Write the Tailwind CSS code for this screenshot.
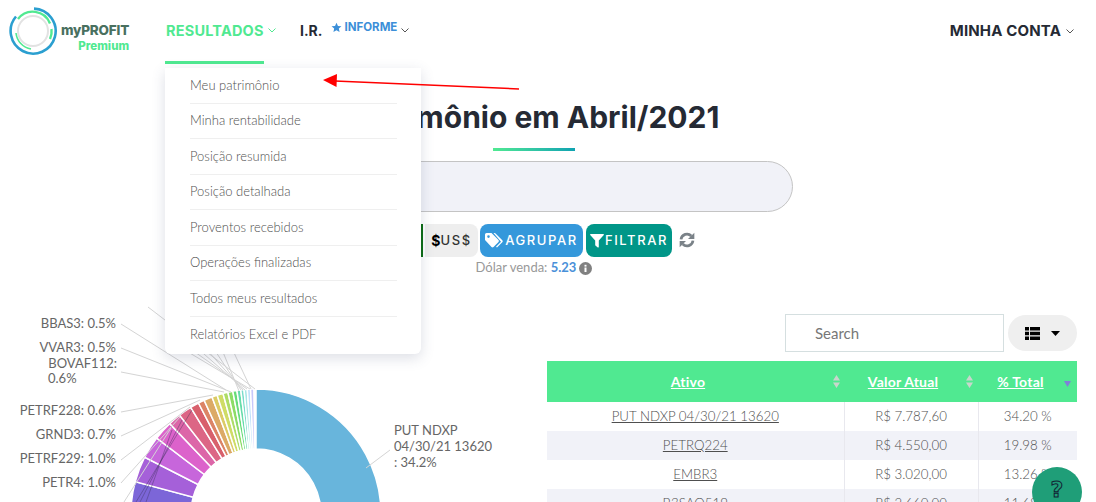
<!DOCTYPE html>
<html lang="pt-BR">

<head>
  <meta charset="UTF-8">
  <meta name="viewport" content="width=device-width, initial-scale=1.0">
  <title>Meu patrimônio</title>
  <script src="https://cdn.jsdelivr.net/npm/@tailwindcss/browser@4"></script>
</head>

<body class="bg-white font-['Lato',sans-serif] text-[#666]">
  <div class="relative h-[502px] w-[1096px] overflow-hidden">

    <!-- Topo -->
    <header class="flex h-[64px] items-start">
      <div class="flex w-[165px] shrink-0 pl-[9px] pt-[6px]">
        <svg width="50" height="50" viewBox="0 0 50 50" fill="none" class="shrink-0">
          <circle cx="24" cy="25" r="15" stroke="#e2e2e2" stroke-width="2" />
          <path d="M25 2.6A22.5 22.5 0 1 1 7 10.5" stroke="#2b9fd0" stroke-width="2.6" />
          <path d="M9 13A18.5 18.5 0 0 1 41 17.5M42.5 23A18.5 18.5 0 0 1 41 33" stroke="#50e991" stroke-width="2.4" />
          <path d="M7 27A18 18 0 0 0 22 43" stroke="#50e991" stroke-width="1.6" />
        </svg>
        <div class="ml-[2px] flex flex-col items-end pt-[16px] font-['Inter'] font-extrabold">
          <span class="text-[13.5px] leading-[17px] tracking-[-0.2px] text-[#49705f]">myPROFIT</span>
          <span class="text-[11.5px] leading-[15px] text-[#50e991]">Premium</span>
        </div>
      </div>
      <nav class="flex items-start font-['Inter'] font-bold">
        <div class="flex h-[64px] w-[99px] items-center whitespace-nowrap border-b-[3px] border-[#50e991] pl-[1px] text-[14.5px] tracking-[0.2px] text-[#50e991]">
          RESULTADOS
          <svg width="8" height="5" viewBox="0 0 8 5" fill="none" stroke="#50e991" class="ml-[4px] shrink-0"><path d="M.5.5 4 4 7.5.5" /></svg>
        </div>
        <div class="ml-[36px] pt-[21px] text-[14px] leading-[20px] text-[#252a34]">I.R.</div>
        <div class="ml-[9px] flex items-center pt-[20px] text-[11.5px] leading-[14px] text-[#3c8fd8]">
          <svg width="11" height="11" viewBox="0 0 24 24" fill="#3c8fd8" class="mr-[2px]"><path d="M12 1.5l3.2 7 7.6.8-5.7 5.1 1.6 7.5L12 18.1 5.3 21.9l1.6-7.5L1.2 9.3l7.6-.8z" /></svg>
          INFORME
          <svg width="8" height="5" viewBox="0 0 8 5" fill="none" stroke="#555" class="ml-[4px] mt-[6px]"><path d="M.5.5 4 4 7.5.5" /></svg>
        </div>
      </nav>
      <div class="ml-auto mr-[22px] flex items-center pt-[21px] font-['Inter'] text-[15px] font-bold leading-[20px] tracking-[0.15px] text-[#252a34]">
        MINHA CONTA
        <svg width="8" height="5" viewBox="0 0 8 5" fill="none" stroke="#555" class="ml-[5px]"><path d="M.5.5 4 4 7.5.5" /></svg>
      </div>
    </header>

    <!-- Título e filtros -->
    <section class="flex w-[1068px] flex-col items-center">
      <h1 class="mr-[72px] mt-[33px] whitespace-nowrap font-['Inter'] text-[30px] font-bold leading-[40px] text-[#252a34]">Meu patrimônio em Abril/2021</h1>
      <div class="mt-[11px] h-[3px] w-[82px] bg-gradient-to-r from-[#50e991] to-[#0fa3b1]"></div>
      <div class="mt-[10px] h-[51px] w-[518px] rounded-full border border-[#c4c4c4] bg-[#f1f2f8]"></div>
      <div class="ml-[347px] mt-[12px] flex h-[33px] w-[374px] items-stretch self-start font-['Inter'] text-[13px] font-medium tracking-[1.6px]">
        <div class="w-[76px] shrink-0 border-r-[2px] border-[#0a6b12]"></div>
        <div class="ml-[2px] flex w-[53px] shrink-0 items-center justify-center rounded-r-[8px] bg-[#eeeeee] text-[#333]"><b class="text-[14px] font-bold tracking-normal text-black">$</b>US$</div>
        <div class="ml-[2px] flex w-[103px] shrink-0 items-center justify-center rounded-[8px] bg-[#3498db] text-white">
          <svg width="18" height="15" viewBox="0 0 18 15" fill="#fff" class="mr-[2px] shrink-0"><path d="M0 1.5A1.5 1.5 0 0 1 1.5 0h5l7 7a1.5 1.5 0 0 1 0 2l-5 5a1.5 1.5 0 0 1-2 0l-6.5-7zM3.5 2.3a1.3 1.3 0 1 0 0 2.6 1.3 1.3 0 0 0 0-2.6z" /><path d="M8.5 0h1.5l7.3 7.3a1.5 1.5 0 0 1 0 2L12 14.500l-1-.7 5-5z" /></svg>
          AGRUPAR
        </div>
        <div class="ml-[3px] flex w-[86px] shrink-0 items-center justify-center rounded-[8px] bg-[#009688] text-white">
          <svg width="14" height="14" viewBox="0 0 14 14" fill="#fff" class="mr-[1px] shrink-0"><path d="M.6 0h12.8a.6.6 0 0 1 .4 1L8.8 6.5V13a.6.6 0 0 1-1 .4l-2.400-2a.6.6 0 0 1-.2-.5V6.5L.2 1A.6.6 0 0 1 .6 0z" /></svg>
          FILTRAR
        </div>
        <svg width="16" height="16" viewBox="0 0 24 24" fill="none" stroke="#7a8288" stroke-width="4" class="ml-[7px] mt-[8px] shrink-0"><path d="M3 11a9 9 0 0 1 15.5-5M21 13a9 9 0 0 1-15.5 5" /><path d="M23 1v9.5h-9.5zM1 23v-9.5h9.5z" fill="#7a8288" stroke="none" /></svg>
      </div>
      <div class="mt-[2px] flex h-[18px] items-center text-[13px] text-[#999]">
        Dólar venda:&nbsp;<b class="font-bold text-[#4a90d9]">5.23</b>
        <svg width="13" height="13" viewBox="0 0 13 13" class="ml-[3px]"><circle cx="6.5" cy="6.5" r="6.5" fill="#808080" /><rect x="5.5" y="5.5" width="2" height="4.5" fill="#fff" /><rect x="5.5" y="2.8" width="2" height="1.8" fill="#fff" /></svg>
      </div>
    </section>

    <!-- Gráfico e tabela -->
    <section class="flex h-[225px] items-start">
      <div class="w-[547px] shrink-0">
        <svg id="chart" width="547" height="225" viewBox="0 277 547 225" class="block text-[13px]">
          <g fill="#666" text-anchor="end">
            <text x="116" y="328">BBAS3: 0.5%</text>
            <text x="116" y="352">VVAR3: 0.5%</text>
            <text x="117" y="368">BOVAF112:</text>
            <text x="48" y="383" text-anchor="start">0.6%</text>
            <text x="116" y="415">PETRF228: 0.6%</text>
            <text x="116" y="439">GRND3: 0.7%</text>
            <text x="116" y="463">PETRF229: 1.0%</text>
            <text x="116" y="487">PETR4: 1.0%</text>
          </g>
          <g fill="#666">
            <text x="394" y="435">PUT NDXP</text>
            <text x="394" y="451">04/30/21 13620</text>
            <text x="394" y="467">: 34.2%</text>
          </g>
        </svg>
      </div>
      <div class="w-[530px] shrink-0">
        <div class="flex justify-end">
          <div class="mt-[37px] flex h-[38px] w-[219px] items-center border border-[#d5dfe0] pl-[29px] text-[15px] text-[#777]">Search</div>
          <div class="ml-[4px] mt-[38px] flex h-[36px] w-[69px] items-center justify-center gap-[11px] rounded-full bg-[#efefef]">
            <svg width="15" height="13" viewBox="0 0 15 13" fill="#000"><path d="M0 0h4v3.5H0zM5 0h10v3.5H5zM0 4.7h4v3.5H0zM5 4.7h10v3.5H5zM0 9.4h4V13H0zM5 9.4h10V13H5z" /></svg>
            <svg width="9" height="5" viewBox="0 0 9 5" fill="#000"><path d="M0 0h9L4.5 5z" /></svg>
          </div>
        </div>
        <table class="mt-[9px] w-[530px] table-fixed border-collapse text-center text-[13.3px] font-light text-[#4f4f4f]">
          <thead>
            <tr class="h-[41px] bg-[#50e991] text-[14px] font-bold tracking-[0.2px] text-white underline">
              <th class="relative w-[297px] pr-[15px]">Ativo
                <svg width="7" height="13" viewBox="0 0 7 13" fill="#c9d6cc" class="absolute right-[4px] top-[14px]"><path d="M3.5 0 7 5.5H0zM3.5 13 7 7.5H0z" /></svg>
              </th>
              <th class="relative w-[134px] pr-[16px]">Valor Atual
                <svg width="7" height="13" viewBox="0 0 7 13" fill="#c9d6cc" class="absolute right-[5px] top-[14px]"><path d="M3.5 0 7 5.5H0zM3.5 13 7 7.5H0z" /></svg>
              </th>
              <th class="relative pr-[14px]">% Total
                <svg width="7" height="6" viewBox="0 0 7 6" fill="#8080d8" class="absolute right-[6px] top-[20px]"><path d="M0 0h7L3.5 6z" /></svg>
              </th>
            </tr>
          </thead>
          <tbody>
            <tr class="h-[29px]">
              <td class="underline">PUT NDXP 04/30/21 13620</td>
              <td class="border-l border-[#e8e8ee]">R$ 7.787,60</td>
              <td class="border-l border-[#e8e8ee]">34.20 %</td>
            </tr>
            <tr class="h-[29px] bg-[#f1f2f8]">
              <td class="underline">PETRQ224</td>
              <td class="border-l border-[#e8e8ee]">R$ 4.550,00</td>
              <td class="border-l border-[#e8e8ee]">19.98 %</td>
            </tr>
            <tr class="h-[29px]">
              <td class="underline">EMBR3</td>
              <td class="border-l border-[#e8e8ee]">R$ 3.020,00</td>
              <td class="border-l border-[#e8e8ee]">13.26 %</td>
            </tr>
            <tr class="h-[29px] bg-[#f1f2f8]">
              <td class="underline">B3SAQ519</td>
              <td class="border-l border-[#e8e8ee]">R$ 2.660,00</td>
              <td class="border-l border-[#e8e8ee]">11.68 %</td>
            </tr>
          </tbody>
        </table>
      </div>
    </section>

    <!-- Menu aberto -->
    <div class="absolute left-[165px] top-[68px] h-[286px] w-[256px] rounded-b-[6px] bg-white px-[25px] text-[13px] font-light text-[#4f4f4f] shadow-[0_4px_14px_rgba(60,70,110,0.18)]">
      <a class="flex h-[35.5px] w-[207px] items-center border-b border-[#efefef]">Meu patrimônio</a>
      <a class="flex h-[35.5px] w-[207px] items-center border-b border-[#efefef]">Minha rentabilidade</a>
      <a class="flex h-[35.5px] w-[207px] items-center border-b border-[#efefef]">Posição resumida</a>
      <a class="flex h-[35.5px] w-[207px] items-center border-b border-[#efefef]">Posição detalhada</a>
      <a class="flex h-[35.5px] w-[207px] items-center border-b border-[#efefef]">Proventos recebidos</a>
      <a class="flex h-[35.5px] w-[207px] items-center border-b border-[#efefef]">Operações finalizadas</a>
      <a class="flex h-[35.5px] w-[207px] items-center border-b border-[#efefef]">Todos meus resultados</a>
      <a class="flex h-[35.5px] w-[207px] items-center">Relatórios Excel e PDF</a>
    </div>

    <!-- Seta vermelha -->
    <svg class="absolute left-[320px] top-[70px]" width="202" height="22" viewBox="320 70 202 22">
      <path d="M335 81 519 89" stroke="#f00" stroke-width="1.5" />
      <path d="M323 80 337 74 336.5 87z" fill="#f00" />
    </svg>

    <!-- Ajuda -->
    <div class="absolute left-[1032px] top-[467px] flex h-[50px] w-[50px] items-start justify-center rounded-full bg-[#1f9e78] pt-[9px] font-['DejaVu_Sans'] text-[22px] font-bold leading-[28px] text-transparent [-webkit-text-stroke:1px_#123]">?</div>
  </div>

  <script>
    // Desenha as fatias e as linhas do gráfico
    const NS = "http://www.w3.org/2000/svg";
    const chart = document.getElementById("chart");
    const cx = 256, cy = 514, outer = 125, inner = 65;

    function pt(r, deg) {
      const a = deg * Math.PI / 180;
      return [cx + r * Math.sin(a), cy - r * Math.cos(a)];
    }

    function slice(from, to, color) {
      const p = document.createElementNS(NS, "path");
      const [a, b] = pt(outer, from), [c, d] = pt(outer, to), [e, f] = pt(inner, to), [g, h] = pt(inner, from);
      const big = to - from > 180 ? 1 : 0;
      p.setAttribute("d", `M${a} ${b}A${outer} ${outer} 0 ${big} 1 ${c} ${d}L${e} ${f}A${inner} ${inner} 0 ${big} 0 ${g} ${h}Z`);
      p.setAttribute("fill", color);
      p.setAttribute("stroke", "#fff");
      p.setAttribute("stroke-width", "1.5");
      return p;
    }

    function line(x1, y1, x2, y2, color) {
      const l = document.createElementNS(NS, "line");
      l.setAttribute("x1", x1); l.setAttribute("y1", y1);
      l.setAttribute("x2", x2); l.setAttribute("y2", y2);
      l.setAttribute("stroke", color || "#d4d4d4");
      return l;
    }

    const slices = [
      [-110, -75, "#7c66d8"], [-75, -63, "#a560d9"], [-63, -52.6, "#c766db"], [-52.6, -43.7, "#dc62cb"],
      [-43.7, -37.7, "#dc66a8"], [-37.7, -31.5, "#dc6685"], [-31.5, -27.4, "#d8606c"], [-27.4, -24.5, "#dc8466"],
      [-24.5, -20.6, "#dcaa66"], [-20.6, -18.1, "#dccb66"], [-18.1, -15.3, "#cfdc66"], [-15.3, -13, "#aedc66"],
      [-13, -10.7, "#8cdc66"], [-10.7, -8.8, "#66dc78"], [-8.8, -7, "#66dcaa"], [-7, -5.5, "#7adccb"],
      [-5.5, -4, "#a6e6e6"], [-4, -2.5, "#bfe0fa"], [-2.5, -1, "#c8c8fa"], [0, 123, "#68b5dc"]
    ];
    slices.forEach(s => chart.appendChild(slice(s[0], s[1], s[2])));

    [
      [121, 324, 226, 390], [121, 348, 231, 392], [121, 372, 224, 392], [121, 412, 213, 395],
      [121, 436, 200, 400], [121, 460, 190, 407], [121, 483, 180, 417], [124, 502, 171, 428],
      [148, 307, 255, 389], [168, 340, 250, 389], [178, 340, 247, 389], [188, 340, 245, 390],
      [198, 340, 243, 390], [208, 340, 241, 390], [218, 340, 239, 391], [228, 340, 251, 389],
      [390, 450, 366, 468]
    ].forEach(l => chart.appendChild(line(l[0], l[1], l[2], l[3])));

    // Linhas escuras por cima das fatias roxas
    [[136, 502, 192, 410], [140, 502, 182, 420], [146, 502, 172, 430]].forEach(l => chart.appendChild(line(l[0], l[1], l[2], l[3], "rgba(60,50,90,0.4)")));
  </script>
</body>

</html>
